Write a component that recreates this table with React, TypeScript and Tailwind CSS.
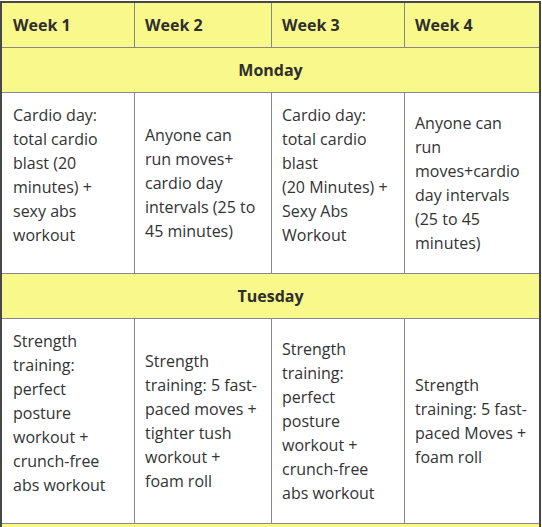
import React from 'react';

type Cell = { lines: string[]; gap?: boolean };

const weeks = ['Week 1', 'Week 2', 'Week 3', 'Week 4'];

const days: { name: string; cells: Cell[] }[] = [
    {
        name: 'Monday',
        cells: [
            { lines: ['Cardio day:', 'total cardio', 'blast (20', 'minutes) +', 'sexy abs', 'workout'], gap: true },
            { lines: ['Anyone can', 'run moves+', 'cardio day', 'intervals (25 to', '45 minutes)'] },
            { lines: ['Cardio day:', 'total cardio', 'blast', '(20 Minutes) +', 'Sexy Abs', 'Workout'], gap: true },
            { lines: ['Anyone can', 'run', 'moves+cardio', 'day intervals', '(25 to 45', 'minutes)'] },
        ],
    },
    {
        name: 'Tuesday',
        cells: [
            { lines: ['Strength', 'training:', 'perfect', 'posture', 'workout +', 'crunch-free', 'abs workout'], gap: true },
            { lines: ['Strength', 'training: 5 fast-', 'paced moves +', 'tighter tush', 'workout +', 'foam roll'] },
            { lines: ['Strength', 'training:', 'perfect', 'posture', 'workout +', 'crunch-free', 'abs workout'] },
            { lines: ['Strength', 'training: 5 fast-', 'paced Moves +', 'foam roll'] },
        ],
    },
];

// first column sits 1px further from the thick outer border
const padX = ['pl-[11px] pr-[9px]', 'px-[10px]', 'px-[10px]', 'px-[10px]'];

export default function App() {
    return (
        <div className="w-[542px] h-[527px] overflow-hidden bg-white pt-px font-['Open_Sans',sans-serif] text-[16px] leading-6 text-[#333]">
            <div className="w-[541px] border-x-2 border-t-2 border-[#474747] bg-[#888] grid grid-cols-[132px_136px_132px_134px] gap-px">
                {weeks.map((w, i) => (
                    <div key={w} className={`bg-[#f9f88a] py-[10px] font-bold text-[#2e2e2e] ${padX[i]}`}>
                        {w}
                    </div>
                ))}
                {days.map((day) => (
                    <React.Fragment key={day.name}>
                        <div className="col-span-4 bg-[#f9f88a] py-[10px] text-center font-bold text-[#2e2e2e]">
                            {day.name}
                        </div>
                        {day.cells.map((cell, i) => (
                            <div key={i} className={`bg-white py-[10px] flex items-center ${padX[i]}`}>
                                <p className={cell.gap ? 'mb-4 whitespace-nowrap' : 'whitespace-nowrap'}>
                                    {cell.lines.map((l, j) => (
                                        <span key={j} className="block">{l}</span>
                                    ))}
                                </p>
                            </div>
                        ))}
                    </React.Fragment>
                ))}
                {/* next day row, cut off by the viewport */}
                <div className="col-span-4 h-[44px] bg-[#f9f88a]"></div>
            </div>
        </div>
    );
}
